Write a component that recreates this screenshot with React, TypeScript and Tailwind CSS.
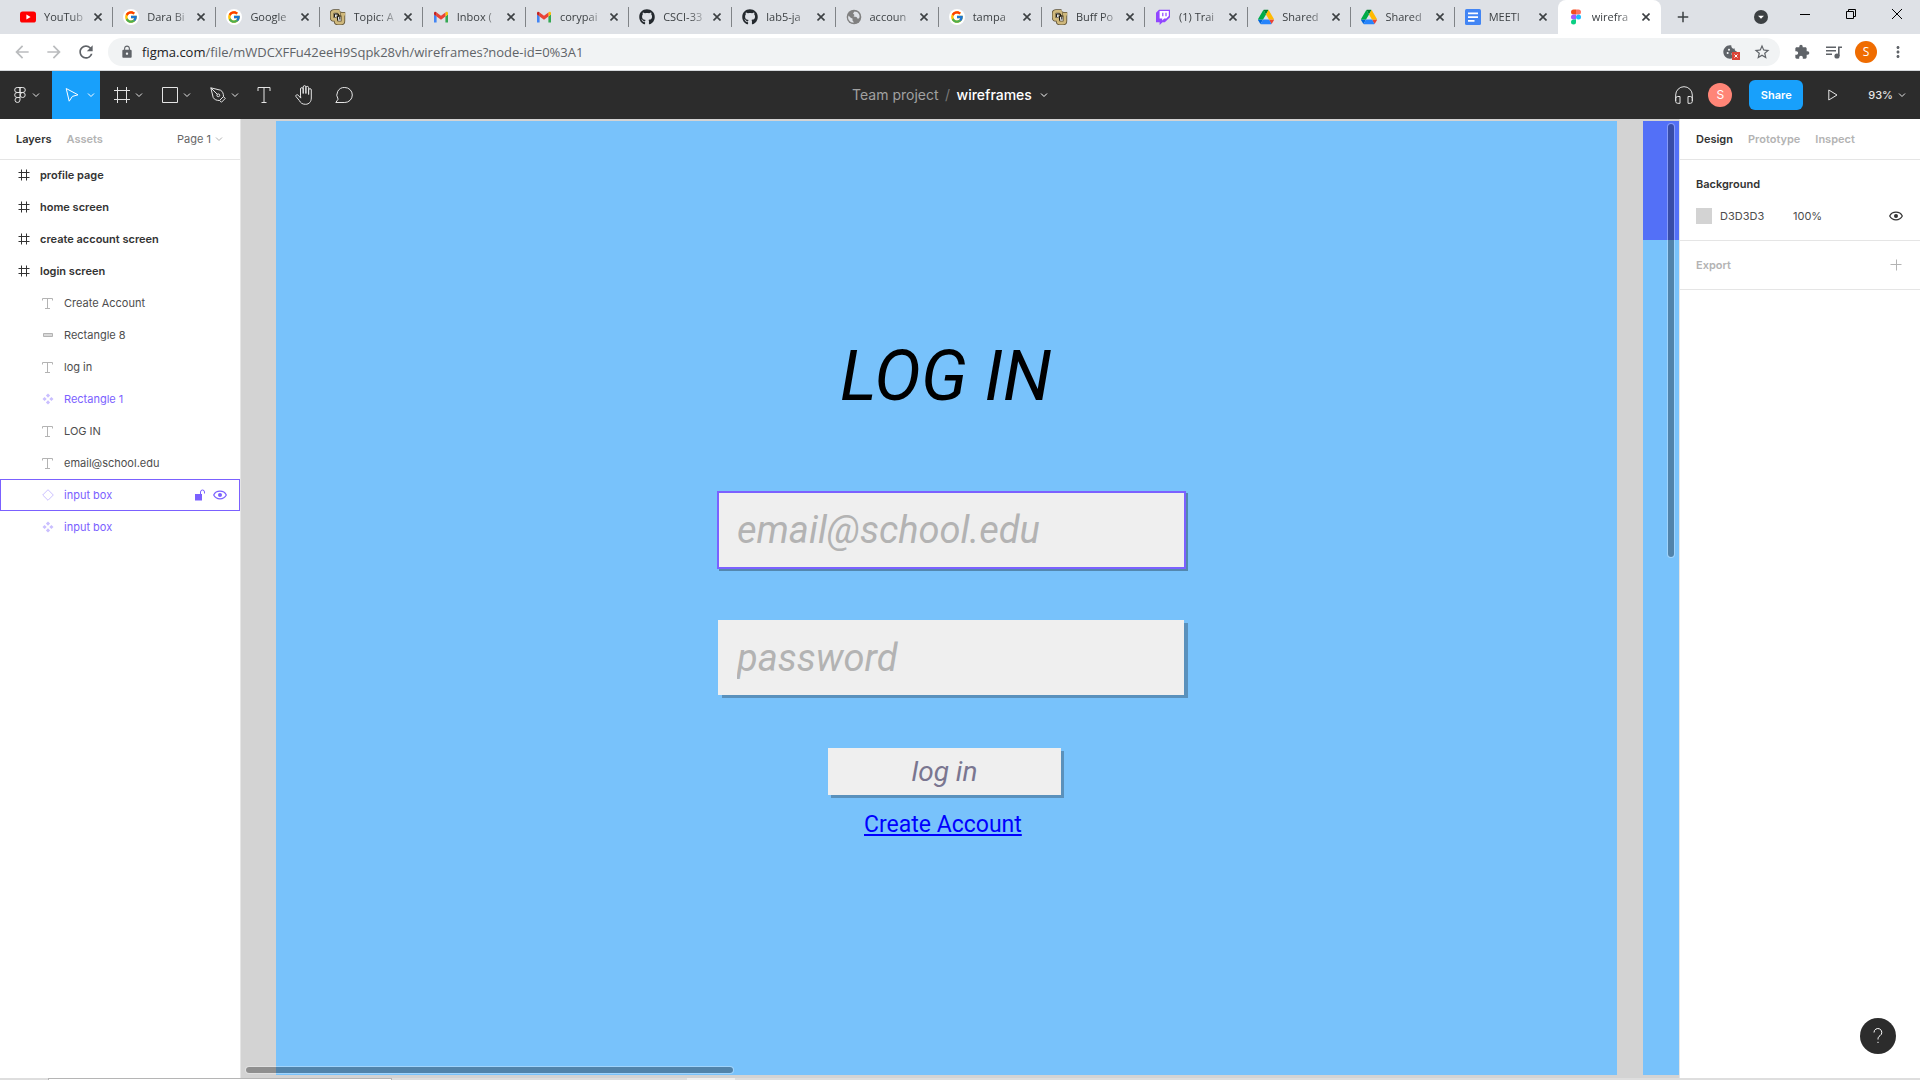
import React from 'react';
import { FcGoogle } from 'react-icons/fc';
import { FaGithub } from 'react-icons/fa';
import {
  MdArrowBack,
  MdArrowForward,
  MdRefresh,
  MdLock,
  MdStarBorder,
  MdExtension,
  MdMoreVert,
  MdAdd,
  MdCookie,
  MdArrowDropDown,
} from 'react-icons/md';

type IconProps = { className?: string };

/* ---------- favicons ---------- */

const YoutubeIcon = () => (
  <svg viewBox="0 0 16 16" className="size-4">
    <rect x="0" y="2.5" width="16" height="11" rx="2.6" fill="#f00" />
    <path d="M6.4 5.6v4.8L10.6 8z" fill="#fff" />
  </svg>
);

const GoogleIcon = () => (
  <span className="flex size-4 items-center justify-center rounded-full bg-white">
    <FcGoogle className="size-3.5" />
  </span>
);

const BuffIcon = () => (
  <svg viewBox="0 0 16 16" className="size-4" fill="none" strokeLinejoin="round">
    <path d="M9.5 2.4H4Q2 2.4 2 4.400v4q0 2 2 2h2v1.600q0 2 2 2h3q2 0 2-2V5.500M9 2.400V8M11 5.200h4.200" stroke="#5c5036" strokeWidth="4.400" />
    <path d="M9.500 2.400H4Q2 2.400 2 4.400v4q0 2 2 2h2v1.600q0 2 2 2h3q2 0 2-2V5.500M9 2.400V8M11 5.200h4.200" stroke="#cfb87c" strokeWidth="2.800" />
    <path d="M4.500 8V5h4v2.500H6.800M9.800 6v4.500M7.500 8v3.500" stroke="#201c14" strokeWidth="1" />
  </svg>
);

const GmailIcon = () => (
  <svg viewBox="0 0 16 16" className="size-4">
    <path d="M1 13.5h2.6V7.4L1 5.2z" fill="#4285f4" />
    <path d="M12.4 13.5H15V5.2l-2.6 2.2z" fill="#34a853" />
    <path d="M12.4 3.4v4L15 5.4V4.2c0-1.5-1.6-2-2.6-.8z" fill="#fbbc04" />
    <path d="M3.6 7.5v-4L8 6.7l4.4-3.2v4L8 10.8z" fill="#ea4335" />
    <path d="M1 4.2v1.2l2.6 2.1v-4C2.6 2.2 1 2.7 1 4.2z" fill="#c5221f" />
  </svg>
);

const GlobeIcon = () => (
  <svg viewBox="0 0 16 16" className="size-4">
    <circle cx="8" cy="8" r="7.300" fill="#808080" />
    <path d="M2.500 6.500 5 9l1.500.5v2L8 13.500c-3 .5-5.800-2-5.900-5zM8.500 2.500 7 4.500 8.500 6l-1 1.500 3 .5 1.500 2 1.500-1.500c.6-3-1.500-6-5-6z" fill="#dee1e6" />
  </svg>
);

const TwitchIcon = () => (
  <svg viewBox="0 0 16 16" className="size-4">
    <path d="M4 .8 1 3.8v9.400h3.600V16l2.900-2.800h2.300l5.200-5V.8z" fill="#9146ff" />
    <path d="M4.600 1.900v7.600h2.600v1.900l2-1.900h2.100l2.500-2.400V1.900z" fill="#fff" />
    <path d="M7.200 3.800h1.200v3.400H7.200zM10.400 3.800h1.200v3.400h-1.200z" fill="#9146ff" />
  </svg>
);

const DriveIcon = () => (
  <svg viewBox="0 0 87.3 78" className="size-4">
    <path d="m6.6 66.85 3.85 6.65c.8 1.4 1.95 2.5 3.3 3.3L27.5 53H0c0 1.55.4 3.1 1.2 4.5z" fill="#0066da" />
    <path d="M43.65 25 29.9 1.2c-1.35.8-2.5 1.9-3.3 3.3L1.2 48.5C.4 49.9 0 51.45 0 53h27.5z" fill="#00ac47" />
    <path d="M73.55 76.8c1.35-.8 2.5-1.9 3.3-3.3l1.6-2.75 7.65-13.25c.8-1.4 1.2-2.95 1.2-4.5H59.8l5.85 11.5z" fill="#ea4335" />
    <path d="M43.65 25 57.4 1.2C56.05.4 54.5 0 52.9 0H34.4c-1.6 0-3.15.45-4.5 1.2z" fill="#00832d" />
    <path d="M59.8 53H27.5L13.75 76.8c1.35.8 2.9 1.2 4.5 1.2h50.8c1.6 0 3.15-.45 4.5-1.2z" fill="#2684fc" />
    <path d="M73.4 26.5 60.7 4.5c-.8-1.4-1.95-2.5-3.3-3.3L43.65 25 59.8 53h27.45c0-1.55-.4-3.1-1.2-4.5z" fill="#ffba00" />
  </svg>
);

const DocsIcon = () => (
  <svg viewBox="0 0 16 16" className="size-4">
    <rect width="16" height="16" rx="1.5" fill="#4285f4" />
    <path d="M3 3.5h10v1.8H3zM3 7.2h10V9H3zM3 11h6.5v1.8H3z" fill="#fff" />
  </svg>
);

const FigmaColorIcon = () => (
  <svg viewBox="0 0 16 16" className="size-4">
    <path d="M8 .5H5.5a2.5 2.5 0 0 0 0 5H8z" fill="#f24e1e" />
    <path d="M8 .5h2.5a2.5 2.5 0 0 1 0 5H8z" fill="#ff7262" />
    <path d="M8 5.5H5.5a2.5 2.5 0 0 0 0 5H8z" fill="#a259ff" />
    <circle cx="10.5" cy="8" r="2.5" fill="#1abcfe" />
    <path d="M8 10.5H5.5A2.5 2.5 0 1 0 8 13z" fill="#0acf83" />
  </svg>
);

/* ---------- toolbar icons ---------- */

const Chevron = ({ className = '' }: IconProps) => (
  <svg viewBox="0 0 8 8" className={`size-2 shrink-0 ${className}`} fill="none" stroke="currentColor">
    <path d="M1 2.5 4 5.5 7 2.5" />
  </svg>
);

const FigmaOutline = () => (
  <svg viewBox="0 0 12 16" className="h-4 w-3" fill="none" stroke="currentColor">
    <path d="M6 .5H3.2a2.5 2.5 0 0 0 0 5H6zM6 .5h2.8a2.5 2.5 0 0 1 0 5H6zM6 5.5H3.2a2.5 2.5 0 0 0 0 5H6zM6 10.5H3.2A2.5 2.5 0 1 0 6 13z" />
    <circle cx="8.7" cy="8" r="2.5" />
  </svg>
);

const CursorIcon = () => (
  <svg viewBox="0 0 14 16" className="h-4 w-3.5" fill="none" stroke="currentColor">
    <path d="M1.2 1.5 13 7.8 7.4 9.4 4.2 14.2z" strokeLinejoin="round" />
  </svg>
);

const FrameIcon = () => (
  <svg viewBox="0 0 16 16" className="size-4" fill="none" stroke="currentColor">
    <path d="M3.5 0v16M12.5 0v16M0 3.5h16M0 12.5h16" />
  </svg>
);

const SquareIcon = () => (
  <svg viewBox="0 0 16 16" className="size-4" fill="none" stroke="currentColor">
    <path d="M.5.5h15v15H.5z" />
  </svg>
);

const PenIcon = () => (
  <svg viewBox="0 0 16 16" className="size-4" fill="none" stroke="currentColor">
    <path d="m.8.8 9.7 2.4c2.2 1.2 3 3.4 3 6.3l1.7 2-3.7 3.7-2-1.7c-2.9 0-5.1-.8-6.3-3zM.8.8l6.6 6.6M9.5 13.5l4-4" />
    <circle cx="8.3" cy="8.3" r="1.4" />
  </svg>
);

const TextIcon = ({ className = 'size-4' }: IconProps) => (
  <svg viewBox="0 0 16 16" className={className} fill="none" stroke="currentColor">
    <path d="M2 4V.5h12V4M8 .5v15M5.500 15.500h5" />
  </svg>
);

const HandIcon = () => (
  <svg viewBox="0 0 18 20" className="h-5 w-[18px]" fill="none" stroke="currentColor" strokeLinecap="round" strokeLinejoin="round">
    <path d="M5.5 10.5V4a1.3 1.3 0 0 1 2.7 0v4.500V2a1.300 1.300 0 0 1 2.700 0v6.500V2.700a1.300 1.300 0 0 1 2.700 0V9.500V5a1.300 1.300 0 0 1 2.700 0v8c0 3.500-2 6.300-5.800 6.300-3.500 0-5-1.600-6.200-3.800L1 11.600c-.8-1.400 1.100-2.600 2.200-1.400l2.300 2.600z" />
  </svg>
);

const CommentIcon = () => (
  <svg viewBox="0 0 18 16" className="h-4 w-[18px]" fill="none" stroke="currentColor">
    <path d="M9.800.5a7.500 7.500 0 1 1 0 15H.8l2.300-3.300A7.500 7.500 0 0 1 9.800.5z" strokeLinejoin="round" />
  </svg>
);

const HeadphonesIcon = () => (
  <svg viewBox="0 0 18 18" className="size-[18px]" fill="none" stroke="currentColor">
    <path d="M.7 15V9a8.300 8.300 0 0 1 16.600 0v6" />
    <path d="M5 10.500v6.800H2.700a2 2 0 0 1-2-2v-2.800a2 2 0 0 1 2-2zM13 10.500v6.800h2.300a2 2 0 0 0 2-2v-2.800a2 2 0 0 0-2-2z" strokeLinejoin="round" />
  </svg>
);

/* ---------- layer icons ---------- */

const HashIcon = () => (
  <svg viewBox="0 0 12 12" className="size-3 shrink-0" fill="none" stroke="#333">
    <path d="M3.500.5v11M8.500.5v11M.5 3.500h11M.5 8.500h11" />
  </svg>
);

const LayerText = () => (
  <svg viewBox="0 0 12 12" className="size-3 shrink-0" fill="none" stroke="#b3b3b3">
    <path d="M.5 3.500v-2h10v2M5.500 1.500v10M3 11.500h5" />
  </svg>
);

const LayerLine = () => (
  <svg viewBox="0 0 12 12" className="size-3 shrink-0" fill="#d9d9d9" stroke="#b3b3b3">
    <path d="M1.500 4.500h9v3h-9z" />
  </svg>
);

const LayerComponent = () => (
  <svg viewBox="0 0 12 12" className="size-3 shrink-0" fill="#cabfff">
    <path d="m6 .5 2.100 2.100L6 4.700 3.900 2.600zM6 7.300l2.100 2.100L6 11.500 3.900 9.400zM2.600 3.900 4.700 6 2.600 8.100.5 6zM9.400 3.900 11.500 6 9.400 8.100 7.300 6z" />
  </svg>
);

const LayerInstance = () => (
  <svg viewBox="0 0 12 12" className="size-3 shrink-0" fill="none" stroke="#cabfff">
    <path d="M6 .7 11.300 6 6 11.300.7 6z" />
  </svg>
);

const EyeIcon = () => (
  <svg viewBox="0 0 14 10" className="h-2.5 w-3.5" fill="none" stroke="currentColor" strokeWidth="1.200">
    <path d="M.7 5C2 2.300 4.300 1.200 7 1.200S12 2.300 13.300 5C12 7.700 9.700 8.800 7 8.800S2 7.700.7 5z" />
    <circle cx="7" cy="5" r="2" fill="currentColor" stroke="none" />
  </svg>
);

const UnlockIcon = () => (
  <svg viewBox="0 0 10 12" className="h-3 w-2.5">
    <path d="M0 5h7v6.500H0z" fill="currentColor" />
    <path d="M5.500 5V3a2 2 0 0 1 4 0v1.500" fill="none" stroke="currentColor" />
  </svg>
);

const tabs: { title: string; icon: React.ReactNode }[] = [
  { title: 'YouTub', icon: <YoutubeIcon /> },
  { title: 'Dara Bi', icon: <GoogleIcon /> },
  { title: 'Google', icon: <GoogleIcon /> },
  { title: 'Topic: A', icon: <BuffIcon /> },
  { title: 'Inbox (', icon: <GmailIcon /> },
  { title: 'corypai', icon: <GmailIcon /> },
  { title: 'CSCI-33', icon: <FaGithub className="size-4 text-[#24292e]" /> },
  { title: 'lab5-ja', icon: <FaGithub className="size-4 text-[#24292e]" /> },
  { title: 'accoun', icon: <GlobeIcon /> },
  { title: 'tampa', icon: <GoogleIcon /> },
  { title: 'Buff Po', icon: <BuffIcon /> },
  { title: '(1) Trai', icon: <TwitchIcon /> },
  { title: 'Shared', icon: <DriveIcon /> },
  { title: 'Shared', icon: <DriveIcon /> },
  { title: 'MEETI', icon: <DocsIcon /> },
  { title: 'wirefra', icon: <FigmaColorIcon /> },
];

function TabStrip() {
  return (
    <header className="flex h-[34px] bg-[#dee1e6] pl-2.5 font-['Open_Sans',sans-serif] text-[11px] text-[#3c4043]">
      <nav className="flex w-full max-w-[1651px]" aria-label="Browser tabs">
        {tabs.map((tab, i) => {
          const active = i === tabs.length - 1;
          const divider = i < tabs.length - 2;
          return (
            <div
              key={i}
              className={`flex min-w-0 flex-1 basis-0 items-center ${active ? 'rounded-t-lg bg-white' : ''}`}
            >
              <button className="flex h-full min-w-0 flex-1 items-center gap-2 pl-2.5">
                <span className="shrink-0">{tab.icon}</span>
                <span className="flex-1 text-left whitespace-nowrap [mask-image:linear-gradient(to_right,black_65%,transparent_115%)]">
                  {tab.title}
                </span>
              </button>
              <button aria-label={`Close ${tab.title}`} className="flex w-7 shrink-0 justify-center">
                <svg viewBox="0 0 8 8" className="size-2" stroke="currentColor" strokeWidth="1.600">
                  <path d="m.5.5 7 7M7.500.5l-7 7" />
                </svg>
              </button>
              <span className={`h-5 w-px shrink-0 ${divider ? 'bg-[#808387]' : ''}`} />
            </div>
          );
        })}
      </nav>
      <button aria-label="New tab" className="flex w-11 shrink-0 items-center justify-center">
        <MdAdd className="size-[18px]" />
      </button>
      <div className="flex-1" />
      <button aria-label="Search tabs" className="flex w-[42px] shrink-0 items-center justify-center">
        <span className="flex size-3.5 items-center justify-center rounded-full bg-[#3c4043] text-white">
          <MdArrowDropDown className="size-4" />
        </span>
      </button>
      <div className="flex h-7 shrink-0 text-black">
        <button aria-label="Minimize" className="flex w-[46px] items-center justify-center">
          <svg viewBox="0 0 10 10" className="size-2.5" stroke="currentColor">
            <path d="M0 5.500h10" />
          </svg>
        </button>
        <button aria-label="Restore" className="flex w-[46px] items-center justify-center">
          <svg viewBox="0 0 10 10" className="size-2.5" fill="none" stroke="currentColor">
            <path d="M.5 2.500h7v7h-7zM2.500 2.500v-2h7v7h-2" />
          </svg>
        </button>
        <button aria-label="Close window" className="flex w-[46px] items-center justify-center">
          <svg viewBox="0 0 10 10" className="size-2.5" stroke="currentColor">
            <path d="m0 0 10 10M10 0 0 10" />
          </svg>
        </button>
      </div>
    </header>
  );
}

function AddressBar() {
  return (
    <div className="flex h-[37px] items-center border-b border-[#d5d8dc] bg-white pr-1.5 pl-1.5 font-['Open_Sans',sans-serif] text-[#5f6368]">
      <button aria-label="Back" className="flex w-8 justify-center text-[#babcbe]">
        <MdArrowBack className="size-5" />
      </button>
      <button aria-label="Forward" className="flex w-8 justify-center text-[#babcbe]">
        <MdArrowForward className="size-5" />
      </button>
      <button aria-label="Reload" className="flex w-8 justify-center">
        <MdRefresh className="size-5" />
      </button>
      <div className="ml-1.5 flex h-7 flex-1 items-center rounded-full bg-[#f1f3f4] pr-0.5 pl-3">
        <MdLock className="size-3.5" />
        <div className="ml-2 flex-1 text-[13px]" aria-label="Address">
          <span className="text-[#202124]">figma.com</span>/file/mWDCXFFu42eeH9Sqpk28vh/wireframes?node-id=0%3A1
        </div>
        <button aria-label="Cookies blocked" className="relative flex w-8 justify-center">
          <MdCookie className="size-4" />
          <svg viewBox="0 0 8 8" className="absolute top-2 right-1.5 size-2">
            <path d="M0 0h8v8H0z" fill="#db4437" />
            <path d="m2.500 2.500 3 3M5.500 2.500l-3 3" stroke="#fff" />
          </svg>
        </button>
        <button aria-label="Bookmark" className="flex w-8 justify-center">
          <MdStarBorder className="size-[18px]" />
        </button>
      </div>
      <button aria-label="Extensions" className="ml-1.5 flex w-8 justify-center">
        <MdExtension className="size-4" />
      </button>
      <button aria-label="Media" className="flex w-8 justify-center">
        <svg viewBox="0 0 16 14" className="h-3.5 w-4" fill="none" stroke="currentColor" strokeWidth="1.600">
          <path d="M0 2.200h10M0 5.700h10M0 9.200h6M12.800 11V2.200H16" />
          <circle cx="11" cy="11" r="1.800" fill="currentColor" />
        </svg>
      </button>
      <button aria-label="Profile" className="flex w-8 justify-center">
        <span className="flex size-[22px] items-center justify-center rounded-full bg-[#ef6c00] text-xs text-white">S</span>
      </button>
      <button aria-label="Menu" className="flex w-8 justify-center">
        <MdMoreVert className="size-[18px]" />
      </button>
    </div>
  );
}

const dropTools = [
  { label: 'Frame', icon: <FrameIcon /> },
  { label: 'Rectangle', icon: <SquareIcon /> },
  { label: 'Pen', icon: <PenIcon /> },
];

const plainTools = [
  { label: 'Text', icon: <TextIcon /> },
  { label: 'Hand', icon: <HandIcon /> },
  { label: 'Comment', icon: <CommentIcon /> },
];

function Toolbar() {
  return (
    <div className="flex h-12 items-stretch bg-[#2c2c2c] text-[#e5e5e5]">
      <div className="flex flex-1 basis-0">
        <button aria-label="Main menu" className="flex w-[52px] items-center gap-1.5 pl-3.5">
          <FigmaOutline />
          <Chevron />
        </button>
        <button aria-label="Move" className="flex w-12 items-center justify-end gap-2 bg-[#18a0fb] pr-[5px] text-white">
          <CursorIcon />
          <Chevron />
        </button>
        {dropTools.map((t) => (
          <button key={t.label} aria-label={t.label} className="flex w-12 items-center justify-end gap-[5px] pr-[5px]">
            {t.icon}
            <Chevron />
          </button>
        ))}
        {plainTools.map((t) => (
          <button key={t.label} aria-label={t.label} className="flex w-10 items-center justify-center">
            {t.icon}
          </button>
        ))}
      </div>
      <div className="flex items-center pr-5 text-sm">
        <a href="#project" className="text-[#a1a1a1]">
          Team project
        </a>
        <span className="w-[18px] text-center text-[#7a7a7a]">/</span>
        <button aria-label="File options" className="flex items-center gap-2 font-medium text-white">
          wireframes
          <Chevron />
        </button>
      </div>
      <div className="flex flex-1 basis-0 items-center justify-end text-xs">
        <button aria-label="Audio" className="flex w-9 justify-center">
          <HeadphonesIcon />
        </button>
        <button aria-label="Account" className="flex w-9 justify-center">
          <span className="flex size-6 items-center justify-center rounded-full bg-[#ff8577] text-white">S</span>
        </button>
        <button className="ml-[11px] h-[30px] w-[54px] rounded-md bg-[#18a0fb] text-[11px] font-semibold text-white">
          Share
        </button>
        <button aria-label="Present" className="flex w-[60px] justify-center">
          <svg viewBox="0 0 10 12" className="h-3 w-2.5" fill="none" stroke="currentColor">
            <path d="M.8 1v10L9 6z" />
          </svg>
        </button>
        <button aria-label="Zoom" className="flex items-center gap-[5px] pr-3.5 pl-[5px] text-[11px] font-medium">
          93%
          <Chevron />
        </button>
      </div>
    </div>
  );
}

const topLayers = ['profile page', 'home screen', 'create account screen', 'login screen'];

const childLayers: { name: string; icon: React.ReactNode; purple?: boolean; hovered?: boolean }[] = [
  { name: 'Create Account', icon: <LayerText /> },
  { name: 'Rectangle 8', icon: <LayerLine /> },
  { name: 'log in', icon: <LayerText /> },
  { name: 'Rectangle 1', icon: <LayerComponent />, purple: true },
  { name: 'LOG IN', icon: <LayerText /> },
  { name: 'email@school.edu', icon: <LayerText /> },
  { name: 'input box', icon: <LayerInstance />, purple: true, hovered: true },
  { name: 'input box', icon: <LayerComponent />, purple: true },
];

function LayersPanel() {
  return (
    <aside className="w-[241px] shrink-0 border-r border-[#e5e5e5] bg-white">
      <div className="flex h-[41px] items-center gap-[15px] border-b border-[#e5e5e5] pr-[17px] pl-4">
        <button className="font-semibold text-[#333]">Layers</button>
        <button className="font-semibold text-[#b3b3b3]">Assets</button>
        <button className="ml-auto flex items-center gap-1 text-[#666]">
          Page 1<Chevron className="text-[#b3b3b3]" />
        </button>
      </div>
      <ul className="-mt-px">
        {topLayers.map((name) => (
          <li key={name} className="flex h-8 items-center gap-2.5 pl-[18px] font-semibold text-[#333]">
            <HashIcon />
            {name}
          </li>
        ))}
        {childLayers.map((l, i) => (
          <li
            key={i}
            className={`flex h-8 items-center gap-2.5 border pr-3 pl-[41px] ${l.hovered ? 'border-[#7b61ff]' : 'border-transparent'} ${l.purple ? 'text-[#7b61ff]' : 'text-[#4d4d4d]'}`}
          >
            {l.icon}
            <span className="flex-1">{l.name}</span>
            {l.hovered && (
              <span className="flex items-center gap-2">
                <button aria-label="Unlock">
                  <UnlockIcon />
                </button>
                <button aria-label="Hide">
                  <EyeIcon />
                </button>
              </span>
            )}
          </li>
        ))}
      </ul>
    </aside>
  );
}

function Canvas() {
  return (
    <main className="relative flex min-w-0 flex-1 gap-[26px] overflow-hidden bg-[#d3d3d3] pt-0.5 pb-[3px] pl-[35px]">
      <section className="relative flex-1 bg-[#78c2fb] font-[Roboto,sans-serif]" aria-label="login screen">
        <h1 className="absolute top-[214px] left-[564px] text-[70px] leading-[82px] text-black italic">LOG IN</h1>
        <input
          aria-label="Email"
          placeholder="email@school.edu"
          className="absolute top-[370px] left-[441px] h-[78px] w-[469px] border-2 border-[#7b61ff] bg-[#efefef] px-[18px] text-[38px] italic shadow-[2px_2px_0_rgba(0,0,0,0.3)] outline-none placeholder:text-[#b3b3b3] placeholder:opacity-100"
        />
        <input
          aria-label="Password"
          placeholder="password"
          className="absolute top-[499px] left-[442px] h-[75px] w-[466px] bg-[#efefef] px-[19px] text-[38px] italic shadow-[4px_3px_0_rgba(0,0,0,0.25)] outline-none placeholder:text-[#b3b3b3] placeholder:opacity-100"
        />
        <button className="absolute top-[627px] left-[552px] h-[47px] w-[233px] bg-[#efefef] text-[28px] leading-8 text-[#7a7690] italic shadow-[3px_3px_0_rgba(0,0,0,0.25)]">
          log in
        </button>
        <a
          href="#create-account"
          className="absolute top-[690px] left-[588px] text-[23px] leading-7 whitespace-nowrap text-[#0000ff] underline"
        >
          Create Account
        </a>
      </section>
      <section className="w-9 shrink-0 bg-[#78c2fb]" aria-label="create account screen">
        <div className="h-[119px] bg-[#5370f7]" />
      </section>
      <div className="absolute top-1 right-1 h-[435px] w-2 rounded-full border border-white/30 bg-black/32 bg-clip-padding" />
      <div className="absolute bottom-1 left-1 h-2 w-[489px] rounded-full border border-white/30 bg-black/32 bg-clip-padding" />
    </main>
  );
}

function DesignPanel() {
  return (
    <aside className="relative w-[241px] shrink-0 border-l border-[#e5e5e5] bg-white">
      <div className="flex h-[41px] items-center gap-[15px] border-b border-[#e5e5e5] px-4 font-semibold text-[#b3b3b3]">
        <button className="text-[#333]">Design</button>
        <button>Prototype</button>
        <button>Inspect</button>
      </div>
      <section className="h-[81px] border-b border-[#e5e5e5] pt-2 pr-[17px] pl-4">
        <h2 className="leading-8 font-semibold text-[#333]">Background</h2>
        <div className="flex h-8 items-center text-[#4d4d4d]">
          <span className="mr-2 size-4 bg-[#d3d3d3]" />
          <span className="w-[73px]">D3D3D3</span>
          <span className="flex-1">100%</span>
          <button aria-label="Toggle background" className="text-[#333]">
            <EyeIcon />
          </button>
        </div>
      </section>
      <section className="flex h-[49px] items-center justify-between border-b border-[#e5e5e5] pr-[18px] pl-4">
        <h2 className="font-semibold text-[#b3b3b3]">Export</h2>
        <button aria-label="Add export" className="text-[#b3b3b3]">
          <svg viewBox="0 0 12 12" className="size-3" stroke="currentColor">
            <path d="M6.500.5v11M.5 5.500h11" />
          </svg>
        </button>
      </section>
      <button
        aria-label="Help"
        className="absolute right-6 bottom-6 flex size-9 items-center justify-center rounded-full bg-[#2c2c2c]"
      >
        <svg viewBox="0 0 10 16" className="h-4 w-2.5" fill="none" stroke="#fff">
          <path d="M1 4.500a3.900 3.900 0 1 1 6 3.200C5.500 8.800 5 9.500 5 11.500M5 13.800v1.200" />
        </svg>
      </button>
    </aside>
  );
}

export default function App() {
  return (
    <div className="flex min-h-screen flex-col bg-white font-[Inter,sans-serif] text-[11px] leading-4">
      <TabStrip />
      <AddressBar />
      <Toolbar />
      <div className="flex flex-1">
        <LayersPanel />
        <Canvas />
        <DesignPanel />
      </div>
      <footer className="flex h-0.5 bg-[#dedede]">
        <div className="ml-12 w-[344px] border border-b-0 border-[#b5b5b5] bg-white" />
        <div className="ml-[295px] w-12 bg-[#f0f0f0]" />
      </footer>
    </div>
  );
}
